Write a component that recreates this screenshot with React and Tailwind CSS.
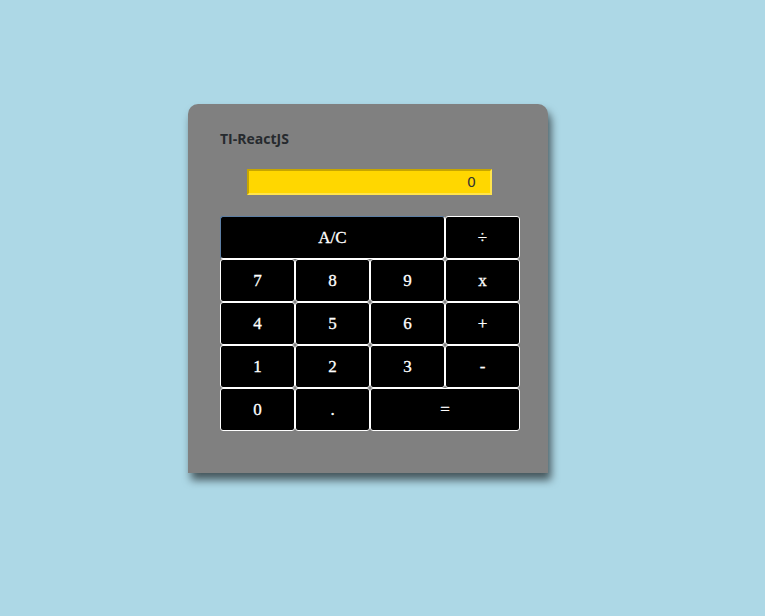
import React, { useState } from 'react';

const keys = [
  { label: 'A/C', span: 'col-span-3' },
  { label: '÷' },
  { label: '7' }, { label: '8' }, { label: '9' }, { label: 'x' },
  { label: '4' }, { label: '5' }, { label: '6' }, { label: '+' },
  { label: '1' }, { label: '2' }, { label: '3' }, { label: '-' },
  { label: '0' }, { label: '.' },
  { label: '=', span: 'col-span-2' },
];

const App = () => {
  const [value] = useState('0');

  return (
    <div className="min-h-[616px] w-full bg-[#add8e6] pt-[104px] pl-[188px]">
      <div className="w-[360px] h-[369px] bg-[#808080] rounded-t-[10px] shadow-[3px_7px_8px_rgba(0,0,0,0.6)] pt-[25px] px-[32px]">
        <h1 className="text-[14px] font-bold text-[#262a2e] leading-[20px]" style={{ fontFamily: '"Open Sans", sans-serif' }}>
          TI-ReactJS
        </h1>

        <div className="mt-[20px] ml-[27px] w-[245px] h-[26px] bg-[#ffd700] border-2 border-t-[#c7a600] border-l-[#c7a600] border-b-[#ffe44d] border-r-[#ffe44d] flex items-center justify-end pr-[14px] text-[14px] text-[#333]" style={{ fontFamily: '"DejaVu Sans", sans-serif' }}>
          {value}
        </div>

        <div className="mt-[21px] grid grid-cols-[repeat(4,75px)] grid-rows-[repeat(5,43px)]">
          {keys.map((k, i) => (
            <button
              key={i}
              className={`${k.span || ''} bg-black text-white border border-white rounded-[3px] text-[17px] ${i === 0 ? 'border-t-[#5d7ea3] border-l-[#5d7ea3]' : ''}`}
              style={{ fontFamily: '"Liberation Serif", serif', WebkitTextStroke: '0.3px white' }}
            >
              {k.label}
            </button>
          ))}
        </div>
      </div>
    </div>
  );
};

export default App;
